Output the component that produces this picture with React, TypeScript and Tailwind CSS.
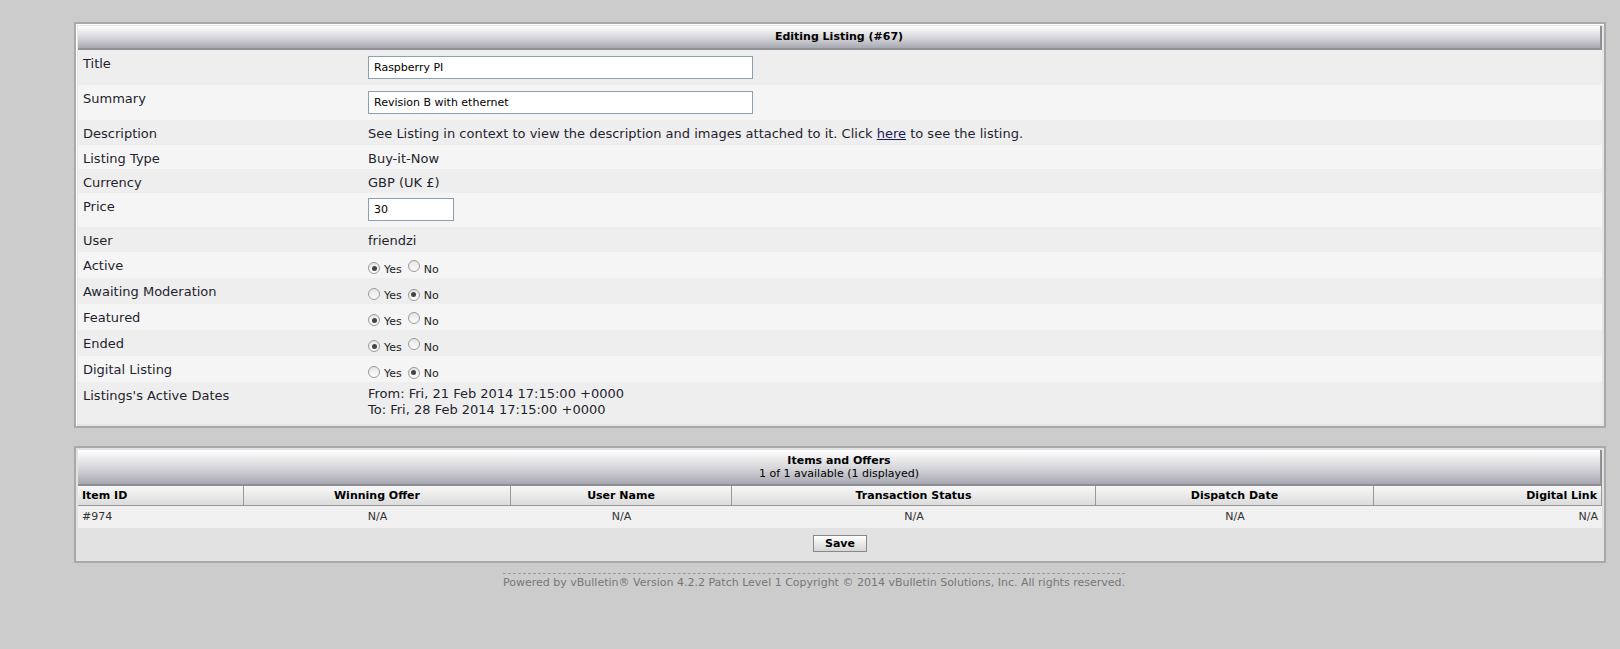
import React from "react";

const font = { fontFamily: '"DejaVu Sans", Verdana, sans-serif' };

function Radio({ checked }: { checked: boolean }) {
  return (
    <span className="inline-flex h-[12px] w-[12px] items-center justify-center rounded-full border border-[#9a9a9a] bg-gradient-to-b from-[#e4e4e4] to-white">
      {checked && <span className="h-[5px] w-[5px] rounded-full bg-[#444]" />}
    </span>
  );
}

function YesNo({ yes }: { yes: boolean }) {
  return (
    <div className="flex items-center pt-[6px] text-[11px] text-[#222]">
      <Radio checked={yes} />
      <span className="ml-[4px] mt-[4px]">Yes</span>
      <span className="ml-[6px]"><Radio checked={!yes} /></span>
      <span className="ml-[4px] mt-[4px]">No</span>
    </div>
  );
}

const header =
  "bg-gradient-to-b from-white via-[#d9d9dd] to-[#a8a8b2] border-b-2 border-[#8f8f95] text-center text-[11px] font-bold text-black";

type Row = { label: string; h: string; content: React.ReactNode };

const rows: Row[] = [
  {
    label: "Title",
    h: "h-[35px]",
    content: (
      <input readOnly value="Raspberry PI" className="mt-[6px] h-[23px] w-[385px] border border-[#8aa0b4] bg-white px-[5px] text-[11px] text-black outline-none" />
    ),
  },
  {
    label: "Summary",
    h: "h-[35px]",
    content: (
      <input readOnly value="Revision B with ethernet" className="mt-[6px] h-[23px] w-[385px] border border-[#8aa0b4] bg-white px-[5px] text-[11px] text-black outline-none" />
    ),
  },
  {
    label: "Description",
    h: "h-[25px]",
    content: (
      <span>
        See Listing in context to view the description and images attached to it. Click{" "}
        <span className="underline text-[#1a1a5a]">here</span> to see the listing.
      </span>
    ),
  },
  { label: "Listing Type", h: "h-[24px]", content: "Buy-it-Now" },
  { label: "Currency", h: "h-[24px]", content: "GBP (UK £)" },
  {
    label: "Price",
    h: "h-[34px]",
    content: (
      <input readOnly value="30" className="mt-[5px] h-[23px] w-[86px] border border-[#8aa0b4] bg-white px-[5px] text-[11px] text-black outline-none" />
    ),
  },
  { label: "User", h: "h-[25px]", content: "friendzi" },
  { label: "Active", h: "h-[26px]", content: <YesNo yes /> },
  { label: "Awaiting Moderation", h: "h-[26px]", content: <YesNo yes={false} /> },
  { label: "Featured", h: "h-[26px]", content: <YesNo yes /> },
  { label: "Ended", h: "h-[26px]", content: <YesNo yes /> },
  { label: "Digital Listing", h: "h-[26px]", content: <YesNo yes={false} /> },
  {
    label: "Listings's Active Dates",
    h: "h-[42px]",
    content: (
      <div className="leading-[16px] pt-[4px]">
        <div>From: Fri, 21 Feb 2014 17:15:00 +0000</div>
        <div>To: Fri, 28 Feb 2014 17:15:00 +0000</div>
      </div>
    ),
  },
];

const cols = [
  { name: "Item ID", w: "w-[166px]", align: "text-left pl-[4px]" },
  { name: "Winning Offer", w: "w-[267px]", align: "text-center" },
  { name: "User Name", w: "w-[221px]", align: "text-center" },
  { name: "Transaction Status", w: "w-[364px]", align: "text-center" },
  { name: "Dispatch Date", w: "w-[278px]", align: "text-center" },
  { name: "Digital Link", w: "flex-1", align: "text-right pr-[4px]" },
];

export default function App() {
  return (
    <div className="min-h-[649px] bg-[#cccccc] pt-[22px]" style={font}>
      <div className="ml-[74px] w-[1532px] border-2 border-[#a9a9a9] bg-[#e6e6e6] p-[2px] shadow-[inset_1px_1px_0_#fff]">
        <div className={`${header} h-[24px] leading-[22px] border-r-2`}>Editing Listing (#67)</div>
        {rows.map((r, i) => (
          <div key={r.label} className={`flex ${r.h} ${i % 2 === 0 ? "bg-[#eeeeee]" : "bg-[#f5f5f5]"} text-[13px] text-[#1f1f2f]`}>
            <div className="w-[290px] shrink-0 pl-[5px] pt-[4px]">{r.label}</div>
            <div className={typeof r.content === "string" || r.label === "Description" ? "pt-[4px]" : ""}>{r.content}</div>
          </div>
        ))}
      </div>

      <div className="ml-[74px] mt-[18px] w-[1532px] border-2 border-[#a9a9a9] bg-[#e2e2e2] p-[2px]">
        <div className={`${header} h-[36px] pt-[4px] leading-[13px] border-r-2`}>
          <div>Items and Offers</div>
          <div className="font-normal">1 of 1 available (1 displayed)</div>
        </div>
        <div className="flex h-[20px] text-[11px] font-bold text-black">
          {cols.map((c) => (
            <div key={c.name} className={`${c.w} ${c.align} border-b border-r border-[#999] bg-gradient-to-b from-[#f8f8f8] to-[#dcdcdc] leading-[19px]`}>
              {c.name}
            </div>
          ))}
        </div>
        <div className="flex h-[22px] bg-[#f0f0f0] text-[11px] text-[#333] leading-[22px]">
          {cols.map((c, i) => (
            <div key={c.name} className={`${c.w} ${c.align}`}>{i === 0 ? "#974" : "N/A"}</div>
          ))}
        </div>
        <div className="flex h-[31px] items-center justify-center">
          <button className="h-[17px] w-[54px] border border-[#888] bg-gradient-to-b from-white to-[#d6d6d6] text-[11px] font-bold text-black leading-none">
            Save
          </button>
        </div>
      </div>

      <div className="mt-[10px] flex justify-center">
        <div className="ml-[8px] border-t border-dashed border-[#999] pt-[1px] text-[11px] text-[#777]">
          Powered by vBulletin® Version 4.2.2 Patch Level 1 Copyright © 2014 vBulletin Solutions, Inc. All rights reserved.
        </div>
      </div>
    </div>
  );
}
